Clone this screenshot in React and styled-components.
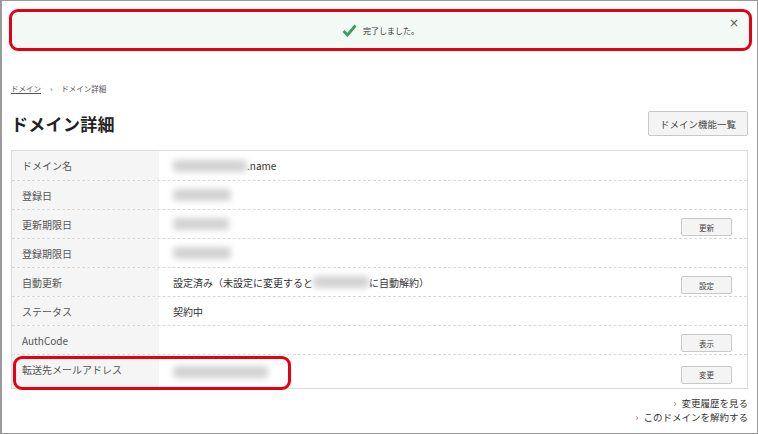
import React from 'react';
import styled, { createGlobalStyle } from 'styled-components';

const Global = createGlobalStyle`
  html, body { margin: 0; padding: 0; background: #fff; }
  body { font-family: "Noto Sans CJK JP", "Noto Sans", sans-serif; color: #333; }
  * { box-sizing: border-box; }
`;

const Frame = styled.div`
  width: 758px;
  height: 434px;
  border: 1px solid #9a9a9a;
  border-left-width: 2px;
  padding: 8px 5px 0 7px;
  overflow: hidden;
`;

const Highlight = styled.div`
  border: 3px solid #e60012;
  border-radius: 9px;
  padding: 1px;
`;

const Alert = styled.div`
  position: relative;
  height: 34px;
  background: #f3faf6;
  border-radius: 6px;
  display: flex;
  align-items: center;
  justify-content: center;
  gap: 6px;
  font-size: 8px;
  color: #333;
`;

const Close = styled.span`
  position: absolute;
  right: 9px;
  top: 3px;
  font-size: 12px;
  color: #555;
  font-family: "DejaVu Sans", sans-serif;
`;

const Content = styled.div`
  padding: 0 4px 0 2px;
`;

const Crumbs = styled.div`
  margin-top: 32px;
  display: flex;
  gap: 9px;
  font-size: 7.5px;
  color: #555;
  a { color: #555; text-decoration: underline; }
`;

const HeadRow = styled.div`
  margin-top: 17px;
  display: flex;
  align-items: center;
  justify-content: space-between;
`;

const Title = styled.h1`
  margin: 0;
  font-size: 17px;
  font-weight: 700;
  color: #222;
  letter-spacing: 0.3px;
`;

const Button = styled.button`
  font-family: inherit;
  background: #f4f4f4;
  border: 1px solid #c8c8c8;
  border-radius: 2px;
  color: #444;
  font-size: ${p => (p.$big ? '9.5px' : '7.5px')};
  width: ${p => (p.$big ? '100px' : '51px')};
  height: ${p => (p.$big ? '25px' : '18px')};
  padding: 0;
  cursor: pointer;
`;

const Table = styled.div`
  margin-top: 14px;
  border: 1px solid #dcdcdc;
`;

const Row = styled.div`
  display: grid;
  grid-template-columns: 147px 1fr auto;
  align-items: center;
  height: ${p => (p.$tall ? '34px' : '29px')};
  border-top: ${p => (p.$first ? 'none' : '1px dashed #d8d8d8')};
  position: relative;
`;

const Label = styled.div`
  height: 100%;
  display: flex;
  align-items: ${p => (p.$tall ? 'flex-start' : 'center')};
  padding-top: ${p => (p.$tall ? '7px' : '0')};
  padding-left: 10px;
  background: #f5f5f5;
  font-size: 10px;
  color: #555;
`;

const Value = styled.div`
  padding-left: 14px;
  font-size: 10px;
  color: #333;
  display: flex;
  align-items: center;
`;

const Action = styled.div`
  padding-right: 15px;
`;

const Blur = styled.span`
  display: inline-block;
  width: ${p => p.$w}px;
  height: 12px;
  background: #d2d2d2;
  filter: blur(3px);
  border-radius: 4px;
`;

const Mark = styled.div`
  position: absolute;
  left: 1px;
  top: 1px;
  width: 278px;
  height: 34px;
  border: 3px solid #e60012;
  border-radius: 9px;
  pointer-events: none;
`;

const Links = styled.div`
  margin-top: 7px;
  display: flex;
  flex-direction: column;
  align-items: flex-end;
  font-size: 9.5px;
  line-height: 14px;
  color: #333;
  span::before {
    content: '›';
    color: #c0392b;
    margin-right: 5px;
  }
`;

const Check = () => (
  <svg width="15" height="13" viewBox="0 0 15 13">
    <path d="M1.5 7 L5.5 11 L13.5 1.5" fill="none" stroke="#3c9b5f" strokeWidth="2.8" />
  </svg>
);

const rows = [
  { label: 'ドメイン名', value: <><Blur $w={74} />.name</> },
  { label: '登録日', value: <Blur $w={58} /> },
  { label: '更新期限日', value: <Blur $w={56} />, btn: '更新' },
  { label: '登録期限日', value: <Blur $w={58} /> },
  { label: '自動更新', value: <>設定済み（未設定に変更すると<Blur $w={56} />に自動解約）</>, btn: '設定' },
  { label: 'ステータス', value: '契約中' },
  { label: 'AuthCode', value: null, btn: '表示' },
  { label: '転送先メールアドレス', value: <Blur $w={95} />, btn: '変更', tall: true },
];

export default function App() {
  return (
    <Frame>
      <Global />
      <Highlight>
        <Alert>
          <Check />
          <span>完了しました。</span>
          <Close>×</Close>
        </Alert>
      </Highlight>
      <Content>
        <Crumbs>
          <a href="#">ドメイン</a>
          <span>›</span>
          <span>ドメイン詳細</span>
        </Crumbs>
        <HeadRow>
          <Title>ドメイン詳細</Title>
          <Button $big>ドメイン機能一覧</Button>
        </HeadRow>
        <Table>
          {rows.map((r, i) => (
            <Row key={r.label} $first={i === 0} $tall={r.tall}>
              <Label $tall={r.tall}>{r.label}</Label>
              <Value>{r.value}</Value>
              <Action>{r.btn && <Button>{r.btn}</Button>}</Action>
              {r.tall && <Mark />}
            </Row>
          ))}
        </Table>
        <Links>
          <span>変更履歴を見る</span>
          <span>このドメインを解約する</span>
        </Links>
      </Content>
    </Frame>
  );
}
